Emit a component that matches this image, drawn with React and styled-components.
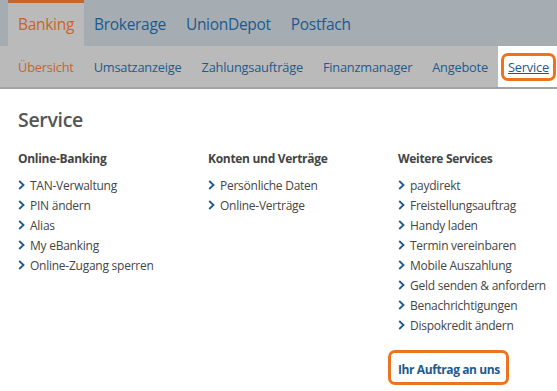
import React from 'react';
import styled, { createGlobalStyle } from 'styled-components';

const GlobalStyle = createGlobalStyle`
    body {
        margin: 0;
        background: #fff;
        font-family: "Open Sans", "Noto Sans", sans-serif;
    }
`;

const TopBar = styled.div`
    display: flex;
    align-items: stretch;
    height: 46px;
    padding-left: 8px;
    background: #a5acb2;
`;

const TopTab = styled.div`
    display: flex;
    align-items: center;
    padding: 0 10px 2px;
    font-size: 15.5px;
    letter-spacing: -0.3px;
    color: ${p => p.active ? '#c4662e' : '#1d5a8e'};
    background: ${p => p.active ? '#bababa' : 'transparent'};
    border-top: 3px solid ${p => p.active ? '#c4662e' : 'transparent'};
    box-sizing: border-box;
`;

const SubNav = styled.div`
    display: flex;
    height: 41px;
    padding-left: 8px;
    background: #bababa;
    border-bottom: 2px solid #a3a3a3;
`;

const SubItem = styled.div`
    display: flex;
    align-items: center;
    padding: 0 10px;
    font-size: 12.8px;
    letter-spacing: -0.2px;
    white-space: nowrap;
    color: ${p => p.active ? '#c4662e' : '#1d5a8e'};
    background: ${p => p.current ? '#fff' : 'transparent'};
    margin-left: ${p => p.current ? 'auto' : '0'};
    padding-right: ${p => p.current ? '4px' : '10px'};
    padding-left: ${p => p.current ? '3px' : '10px'};
`;

const Highlight = styled.span`
    display: inline-block;
    border: 3px solid #ea7420;
    border-radius: 7px;
    padding: ${p => p.pad || '2px 4px'};
`;

const ServiceLink = styled.span`
    text-decoration: underline;
    color: #1d5a8e;
`;

const Content = styled.div`
    padding: 17px 18px 0;
`;

const Title = styled.h1`
    margin: 0 0 17px;
    font-size: 19.5px;
    font-weight: 600;
    color: #555;
    letter-spacing: -0.3px;
`;

const Columns = styled.div`
    display: grid;
    grid-template-columns: 190px 190px 1fr;
`;

const ColTitle = styled.h2`
    margin: 0 0 8px;
    font-size: 12px;
    font-weight: 700;
    color: #444;
    letter-spacing: -0.3px;
    white-space: nowrap;
`;

const List = styled.ul`
    margin: 0;
    padding: 0;
    list-style: none;
`;

const Item = styled.li`
    display: flex;
    align-items: center;
    gap: 5px;
    height: 20px;
    font-size: 12px;
    color: #454545;
    letter-spacing: -0.25px;
    white-space: nowrap;
`;

const Chevron = () => (
    <svg width="7" height="10" viewBox="0 0 7 10">
        <path d="M1.2 1 L5.5 5 L1.2 9" fill="none" stroke="#1d5a8e" strokeWidth="1.8" />
    </svg>
);

const Order = styled.div`
    margin: 15px 0 0 -10px;
`;

const OrderLink = styled.span`
    font-size: 12px;
    font-weight: 700;
    color: #1d5a8e;
    letter-spacing: -0.4px;
`;

const columns = [
    {
        title: 'Online-Banking',
        items: ['TAN-Verwaltung', 'PIN ändern', 'Alias', 'My eBanking', 'Online-Zugang sperren'],
    },
    {
        title: 'Konten und Verträge',
        items: ['Persönliche Daten', 'Online-Verträge'],
    },
    {
        title: 'Weitere Services',
        items: ['paydirekt', 'Freistellungsauftrag', 'Handy laden', 'Termin vereinbaren',
            'Mobile Auszahlung', 'Geld senden & anfordern', 'Benachrichtigungen', 'Dispokredit ändern'],
    },
];

export default function App() {
    return (
        <>
            <GlobalStyle />
            <TopBar>
                <TopTab active>Banking</TopTab>
                <TopTab>Brokerage</TopTab>
                <TopTab>UnionDepot</TopTab>
                <TopTab>Postfach</TopTab>
            </TopBar>
            <SubNav>
                <SubItem active>Übersicht</SubItem>
                <SubItem>Umsatzanzeige</SubItem>
                <SubItem>Zahlungsaufträge</SubItem>
                <SubItem>Finanzmanager</SubItem>
                <SubItem>Angebote</SubItem>
                <SubItem current>
                    <Highlight><ServiceLink>Service</ServiceLink></Highlight>
                </SubItem>
            </SubNav>
            <Content>
                <Title>Service</Title>
                <Columns>
                    {columns.map((col, idx) => (
                        <div key={idx}>
                            <ColTitle>{col.title}</ColTitle>
                            <List>
                                {col.items.map((item, i) => (
                                    <Item key={i}><Chevron />{item}</Item>
                                ))}
                            </List>
                            {idx === 2 &&
                                <Order>
                                    <Highlight pad="4px 6px 3px 7px"><OrderLink>Ihr Auftrag an uns</OrderLink></Highlight>
                                </Order>
                            }
                        </div>
                    ))}
                </Columns>
            </Content>
        </>
    );
}
